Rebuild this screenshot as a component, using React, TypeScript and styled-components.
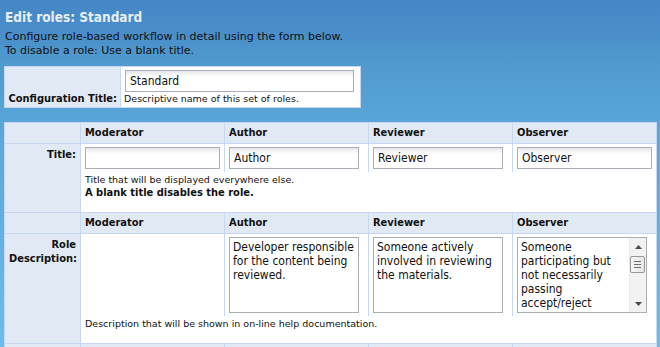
import * as React from "react"
import styled, { createGlobalStyle } from "styled-components"

const GlobalStyle = createGlobalStyle`
  html, body {
    margin: 0;
    padding: 0;
  }
  body {
    min-height: 100vh;
    background: linear-gradient(180deg, #4587c5 0px, #4a8fcb 38px, #4d97cc 52px, #5aa6d8 125px, #6bbcec 347px);
    font-family: "DejaVu Sans", sans-serif;
    font-size: 11px;
    color: #111;
  }
`

const condensed = `"DejaVu Sans Condensed", "DejaVu Sans", sans-serif`
const border = "#c6d7f1"
const labelBg = "#e1e9f4"

const Page = styled.div`
  padding: 8px 4px 0 4px;
`
const Heading = styled.h1`
  margin: 0 0 4px 1px;
  font-family: ${condensed};
  font-size: 13.5px;
  line-height: 18px;
  font-weight: bold;
  color: #e6eef6;
`
const Intro = styled.p`
  margin: 0 0 8px 1px;
  line-height: 14px;
`

const ConfigTable = styled.div`
  display: flex;
  width: max-content;
  gap: 1px;
  padding: 1px;
  background: ${border};
  margin-bottom: 14px;
`
const ConfigLabel = styled.div`
  width: 115px;
  box-sizing: border-box;
  padding: 0 3px 1px 4px;
  background: ${labelBg};
  display: flex;
  align-items: flex-end;
  justify-content: flex-end;
  font-family: ${condensed};
  font-weight: bold;
  line-height: 14px;
  white-space: nowrap;
`
const ConfigValue = styled.div`
  width: 239px;
  box-sizing: border-box;
  padding: 3px 0 1px 3px;
  background: #fff;
`

const TextInput = styled.input<{ $width: number; $indent?: number }>`
  display: block;
  box-sizing: border-box;
  width: ${(p) => p.$width}px;
  height: 22px;
  margin: 0 0 0 ${(p) => p.$indent ?? 0}px;
  padding: 0 4px;
  border: 1px solid #abaeb8;
  background: linear-gradient(180deg, #e6e7ec 0px, #fff 6px);
  font-family: ${condensed};
  font-size: 12px;
  color: #111;
  outline: none;
`
const Hint = styled.div<{ $line?: number }>`
  font-size: 9.5px;
  line-height: ${(p) => p.$line ?? 13}px;
`
const HintStrong = styled.div`
  font-family: ${condensed};
  font-size: 11px;
  line-height: 13px;
  font-weight: bold;
`

const Grid = styled.div`
  display: grid;
  grid-template-columns: 75px repeat(4, 143px);
  gap: 1px;
  padding: 1px;
  background: ${border};
  width: max-content;
`
const HeadCell = styled.div`
  height: 20px;
  padding: 0 4px;
  background: ${labelBg};
  font-family: ${condensed};
  font-weight: bold;
  line-height: 20px;
`
const RowLabel = styled.div`
  padding: 4px 4px 0 4px;
  background: ${labelBg};
  font-family: ${condensed};
  font-weight: bold;
  line-height: 14px;
  text-align: right;
`
const RowBody = styled.div`
  grid-column: 2 / span 4;
  background: #fff;
`
const Fields = styled.div`
  display: grid;
  grid-template-columns: repeat(4, 143px);
  gap: 1px;
  background: ${border};
`
const Field = styled.div`
  background: #fff;
  padding: 3px 4px;
`
const RowHint = styled.div<{ $bottom: number }>`
  padding: 1px 4px ${(p) => p.$bottom}px 4px;
`

const TextBox = styled.textarea`
  display: block;
  box-sizing: border-box;
  width: 130px;
  height: 76px;
  margin: 0;
  padding: 2px 3px;
  border: 1px solid #a9adb4;
  resize: none;
  overflow: hidden;
  font-family: ${condensed};
  font-size: 12px;
  line-height: 14px;
  color: #111;
  outline: none;
`
const ScrollBox = styled.div`
  display: flex;
  box-sizing: border-box;
  width: 130px;
  height: 76px;
  border: 1px solid #a9adb4;
  background: #fff;
`
const InnerText = styled.textarea`
  flex: 1;
  align-self: flex-start;
  box-sizing: border-box;
  height: 72px;
  min-width: 0;
  margin: 0;
  padding: 2px 3px 0 3px;
  border: none;
  resize: none;
  overflow: hidden;
  font-family: ${condensed};
  font-size: 12px;
  line-height: 14px;
  color: #111;
  outline: none;
`
const Scrollbar = styled.div`
  width: 16px;
  display: flex;
  flex-direction: column;
  background: #f2f2f2;
  border-left: 1px solid #eaeaea;
`
const ScrollButton = styled.div`
  height: 17px;
  display: flex;
  align-items: center;
  justify-content: center;
`
const Thumb = styled.div`
  height: 17px;
  margin: 1px 1px 0 0;
  box-sizing: border-box;
  border: 1px solid #979797;
  border-radius: 2px;
  background: linear-gradient(90deg, #f6f6f6, #e6e6e6);
  display: flex;
  flex-direction: column;
  align-items: center;
  justify-content: center;
  gap: 2px;
`
const Grip = styled.span`
  display: block;
  width: 7px;
  height: 1px;
  background: #6d6d6d;
`
const Track = styled.div`
  flex: 1;
`

const Arrow: React.FC<{ up?: boolean }> = ({ up }) => (
  <svg width="7" height="4" viewBox="0 0 7 4">
    <path d={up ? "M3.5 0 L7 4 L0 4 Z" : "M0 0 L7 0 L3.5 4 Z"} fill="#4a4a4a" />
  </svg>
)

const roles = ["Moderator", "Author", "Reviewer", "Observer"]

const Header: React.FC<{ blank?: boolean }> = ({ blank }) => (
  <>
    <HeadCell />
    {roles.map((r) => (
      <HeadCell key={r}>{blank ? null : r}</HeadCell>
    ))}
  </>
)

export default function App() {
  return (
    <Page>
      <GlobalStyle />
      <Heading>Edit roles: Standard</Heading>
      <Intro>
        Configure role-based workflow in detail using the form below.
        <br />
        To disable a role: Use a blank title.
      </Intro>

      <ConfigTable>
        <ConfigLabel>Configuration Title:</ConfigLabel>
        <ConfigValue>
          <TextInput $width={229} $indent={1} defaultValue="Standard" />
          <Hint $line={14}>Descriptive name of this set of roles.</Hint>
        </ConfigValue>
      </ConfigTable>

      <Grid>
        <Header />
        <RowLabel>Title:</RowLabel>
        <RowBody>
          <Fields>
            <Field>
              <TextInput $width={135} defaultValue="" />
            </Field>
            <Field>
              <TextInput $width={130} defaultValue="Author" />
            </Field>
            <Field>
              <TextInput $width={130} defaultValue="Reviewer" />
            </Field>
            <Field>
              <TextInput $width={135} defaultValue="Observer" />
            </Field>
          </Fields>
          <RowHint $bottom={13}>
            <Hint>Title that will be displayed everywhere else.</Hint>
            <HintStrong>A blank title disables the role.</HintStrong>
          </RowHint>
        </RowBody>

        <Header />
        <RowLabel>
          Role
          <br />
          Description:
        </RowLabel>
        <RowBody>
          <Fields>
            <Field />
            <Field>
              <TextBox defaultValue="Developer responsible for the content being reviewed." />
            </Field>
            <Field>
              <TextBox defaultValue="Someone actively involved in reviewing the materials." />
            </Field>
            <Field>
              <ScrollBox>
                <InnerText defaultValue="Someone participating but not necessarily passing accept/reject decisions on the materials." />
                <Scrollbar>
                  <ScrollButton>
                    <Arrow up />
                  </ScrollButton>
                  <Thumb>
                    <Grip />
                    <Grip />
                    <Grip />
                  </Thumb>
                  <Track />
                  <ScrollButton>
                    <Arrow />
                  </ScrollButton>
                </Scrollbar>
              </ScrollBox>
            </Field>
          </Fields>
          <RowHint $bottom={13}>
            <Hint>Description that will be shown in on-line help documentation.</Hint>
          </RowHint>
        </RowBody>

        <Header blank />
      </Grid>
    </Page>
  )
}
